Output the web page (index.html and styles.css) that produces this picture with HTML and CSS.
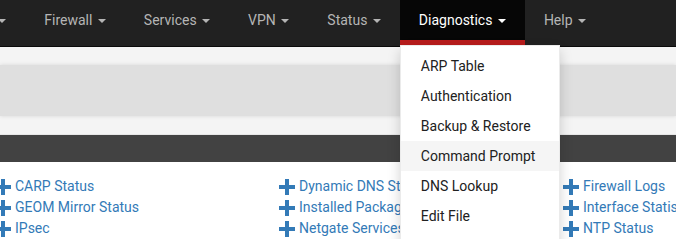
FILE: index.html
```html
<!DOCTYPE html>
<html lang="en">
<head>
    <meta charset="UTF-8">
    <meta name="viewport" content="width=device-width, initial-scale=1.0">
    <title>Dashboard</title>
    <link rel="stylesheet" href="styles.css">
</head>
<body>
    <nav class="navbar">
        <ul class="nav">
            <li><a href="#">System <span class="caret"></span></a></li>
            <li><a href="#">Interfaces <span class="caret"></span></a></li>
            <li><a href="#">Firewall <span class="caret"></span></a></li>
            <li><a href="#">Services <span class="caret"></span></a></li>
            <li><a href="#">VPN <span class="caret"></span></a></li>
            <li><a href="#">Status <span class="caret"></span></a></li>
            <li class="active">
                <a href="#">Diagnostics <span class="caret"></span></a>
                <ul class="dropdown-menu">
                    <li><a href="#">ARP Table</a></li>
                    <li><a href="#">Authentication</a></li>
                    <li><a href="#">Backup &amp; Restore</a></li>
                    <li class="hover"><a href="#">Command Prompt</a></li>
                    <li><a href="#">DNS Lookup</a></li>
                    <li><a href="#">Edit File</a></li>
                    <li><a href="#">Factory Defaults</a></li>
                    <li><a href="#">Halt System</a></li>
                </ul>
            </li>
            <li><a href="#">Help <span class="caret"></span></a></li>
        </ul>
    </nav>

    <div class="page-band">
        <div class="band-inner"></div>
    </div>

    <div class="panel-heading"></div>

    <div class="panel-body">
        <div class="widget-list">
            <a href="#"><svg class="plus" viewBox="0 0 16 16"><rect x="0" y="6" width="16" height="4"/><rect x="6" y="0" width="4" height="16"/></svg>CARP Status</a>
            <a href="#"><svg class="plus" viewBox="0 0 16 16"><rect x="0" y="6" width="16" height="4"/><rect x="6" y="0" width="4" height="16"/></svg>Dynamic DNS Status</a>
            <a href="#"><svg class="plus" viewBox="0 0 16 16"><rect x="0" y="6" width="16" height="4"/><rect x="6" y="0" width="4" height="16"/></svg>Firewall Logs</a>
            <a href="#"><svg class="plus" viewBox="0 0 16 16"><rect x="0" y="6" width="16" height="4"/><rect x="6" y="0" width="4" height="16"/></svg>GEOM Mirror Status</a>
            <a href="#"><svg class="plus" viewBox="0 0 16 16"><rect x="0" y="6" width="16" height="4"/><rect x="6" y="0" width="4" height="16"/></svg>Installed Packages</a>
            <a href="#"><svg class="plus" viewBox="0 0 16 16"><rect x="0" y="6" width="16" height="4"/><rect x="6" y="0" width="4" height="16"/></svg>Interface Statistics</a>
            <a href="#"><svg class="plus" viewBox="0 0 16 16"><rect x="0" y="6" width="16" height="4"/><rect x="6" y="0" width="4" height="16"/></svg>IPsec</a>
            <a href="#"><svg class="plus" viewBox="0 0 16 16"><rect x="0" y="6" width="16" height="4"/><rect x="6" y="0" width="4" height="16"/></svg>Netgate Services</a>
            <a href="#"><svg class="plus" viewBox="0 0 16 16"><rect x="0" y="6" width="16" height="4"/><rect x="6" y="0" width="4" height="16"/></svg>NTP Status</a>
        </div>
    </div>
</body>
</html>
```

FILE: styles.css
```css
html, body {
    overflow: hidden;
}
body {
    font-family: Roboto, "Liberation Sans", sans-serif;
    font-size: 14px;
    margin: 0;
    background-color: #fff;
    color: #212121;
    white-space: nowrap;
}
a {
    text-decoration: none;
}
.navbar {
    height: 46px;
    background-color: #212121;
    border-bottom: 1px solid #0a0a0a;
}
.nav {
    display: flex;
    list-style: none;
    margin: 0 0 0 -187px;
    padding: 0;
}
.nav > li {
    position: relative;
}
.nav > li > a {
    display: block;
    height: 40px;
    line-height: 40px;
    padding: 0 19px;
    color: #b5b5b5;
    border-bottom: 5px solid transparent;
}
.nav > li.active > a {
    background-color: #060606;
    color: #fff;
    border-bottom-color: #b71c1c;
}
.caret {
    display: inline-block;
    width: 0;
    height: 0;
    margin-left: 2px;
    vertical-align: middle;
    border-top: 4px solid;
    border-right: 4px solid transparent;
    border-left: 4px solid transparent;
}
.dropdown-menu {
    position: absolute;
    top: 45px;
    left: 0;
    z-index: 10;
    width: 158px;
    list-style: none;
    margin: 0;
    padding: 5px 0;
    background-color: #fff;
    border: 1px solid rgba(0,0,0,0.08);
    box-shadow: 0 6px 12px rgba(0,0,0,0.175);
}
.dropdown-menu a {
    display: block;
    padding: 5px 20px;
    line-height: 20px;
    color: #212121;
}
.dropdown-menu .hover a {
    background-color: #f5f5f5;
}
.page-band {
    background-color: #f4f4f4;
    padding: 18px 0 18px;
    border-bottom: 1px solid #e6e6e6;
}
.band-inner {
    height: 51px;
    background-color: #dfdfdf;
    box-shadow: 0 0 4px rgba(0,0,0,0.12);
}
.panel-heading {
    height: 27px;
    background-color: #424242;
}
.panel-body {
    padding-top: 14px;
}
.widget-list {
    display: grid;
    grid-template-columns: 284px 284px 284px;
    margin-left: -5px;
}
.widget-list a {
    display: flex;
    align-items: center;
    height: 21px;
    line-height: 21px;
    color: #337ab7;
}
.plus {
    width: 16px;
    height: 16px;
    margin-right: 4px;
    fill: #337ab7;
    flex-shrink: 0;
}
```
